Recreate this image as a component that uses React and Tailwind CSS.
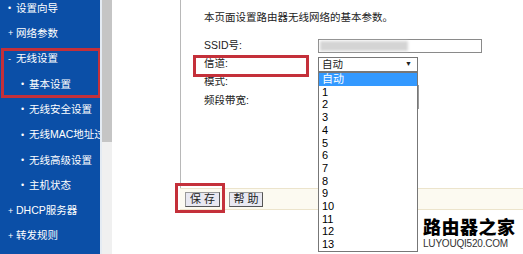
const navItems = [
  { mark: '•', label: '设置向导', sub: false },
  { mark: '+', label: '网络参数', sub: false },
];
const wirelessItems = [
  { mark: '-', label: '无线设置', sub: false },
  { mark: '•', label: '基本设置', sub: true },
];
const moreItems = [
  { mark: '•', label: '无线安全设置', sub: true },
  { mark: '•', label: '无线MAC地址过滤', sub: true },
  { mark: '•', label: '无线高级设置', sub: true },
  { mark: '•', label: '主机状态', sub: true },
  { mark: '+', label: 'DHCP服务器', sub: false },
  { mark: '+', label: '转发规则', sub: false },
];

const channels = ['自动', '1', '2', '3', '4', '5', '6', '7', '8', '9', '10', '11', '12', '13'];

const NavItem = ({ mark, label, sub }) => (
  <div className={`h-[25.3px] flex items-center whitespace-nowrap ${sub ? 'pl-[21px]' : 'pl-[8px]'}`}>
    <span className="w-[8px] shrink-0 text-[9px] leading-none">{mark}</span>
    <span className="shrink-0">{label}</span>
  </div>
);

const App = () => {
  return (
    <div className="w-[523px] h-[254px] flex overflow-hidden bg-white text-[10.5px] font-['Liberation_Sans','Noto_Sans_CJK_SC',sans-serif]">
      {/* Left menu */}
      <div className="w-[100px] shrink-0 bg-[#0b4fa7] text-white">
        <div className="-mt-[4px]">
          {navItems.map((item) => <NavItem key={item.label} {...item} />)}
          <div className="relative">
            {wirelessItems.map((item) => <NavItem key={item.label} {...item} />)}
            <div className="absolute left-[1px] top-[1px] w-[100px] h-[50px] border-[3px] border-[#c4303a]" />
          </div>
          {moreItems.map((item) => <NavItem key={item.label} {...item} />)}
        </div>
      </div>

      {/* Frame scrollbar */}
      <div className="relative z-10 w-[12px] shrink-0 flex bg-white">
        <div className="w-[2px] bg-[#e4ebf3]" />
        <div className="flex-1 flex flex-col">
          <div className="h-[142px] bg-[#c5c5c5]" />
          <div className="flex-1 bg-[#f0f0f0]" />
        </div>
      </div>

      {/* Main content */}
      <div className="relative flex-1 pl-[68px] text-[#222]">
        <div className="h-[188px] border-l border-[#b8b8b8] pl-[23px] pt-[10px]">
          <p className="leading-[14px]">本页面设置路由器无线网络的基本参数。</p>

          <div className="relative mt-[13px] grid grid-cols-[114px_1fr] grid-rows-[18px_18px_18px_19px] items-center">
            <span>SSID号:</span>
            <div className="w-[164px] h-[14px] border border-[#8a8a8a] bg-white flex items-center pl-[1px]">
              <div className="w-[88px] h-[10px] bg-[#d4d4d4] blur-[1.5px]" />
            </div>

            <span>信道:</span>
            <div className="relative self-start mt-[2px] w-[100px] h-[15px] border border-[#777] bg-white flex items-center justify-between pl-[3px] pr-[5px]">
              <span>自动</span>
              <span className="text-[7px]">▼</span>
              <div className="absolute z-10 left-[-1px] top-[14px] w-[100px] border border-[#777] bg-white">
                {channels.map((c, i) => (
                  <div
                    key={c}
                    className={`h-[12.7px] flex items-center pl-[3px] text-[11px] ${i === 0 ? 'bg-[#3399ff] text-white' : 'text-black'}`}
                  >
                    {c}
                  </div>
                ))}
                <div className="absolute right-[-2px] top-[12px] w-[1px] h-[24px] bg-[#9a9a9a]" />
              </div>
            </div>

            <span>模式:</span>
            <span />

            <span>频段带宽:</span>
            <span />

            <div className="absolute left-[-11px] top-[18px] w-[116px] h-[22px] border-[3px] border-[#c4303a]" />
          </div>
        </div>

        <div className="relative h-[22px] border-y border-[#ece4cc] bg-[#fcfaf1] flex items-center gap-[9px] pl-[5px]">
          <button className="w-[35px] h-[15px] bg-[#e8e8f1] border border-[#555] border-t-[#999] border-l-[#999] text-[11px] leading-none tracking-[3px] pl-[3px] text-[#222]">
            保存
          </button>
          <button className="w-[34px] h-[15px] bg-[#e8e8f1] border border-[#555] border-t-[#999] border-l-[#999] text-[11px] leading-none tracking-[3px] pl-[3px] text-[#222]">
            帮助
          </button>
          <div className="absolute left-[-5px] top-[-6px] w-[50px] h-[30px] border-[3px] border-[#c4303a]" />
        </div>

        {/* Watermark */}
        <div className="absolute left-[311px] top-[219px] flex flex-col items-start">
          <span className="text-[18px] leading-[19px] font-black text-black tracking-[0.5px]">路由器之家</span>
          <span className="text-[10px] leading-[11px] text-[#333] tracking-[-0.2px]">LUYOUQI520.COM</span>
        </div>
      </div>
    </div>
  );
};

export default App;
